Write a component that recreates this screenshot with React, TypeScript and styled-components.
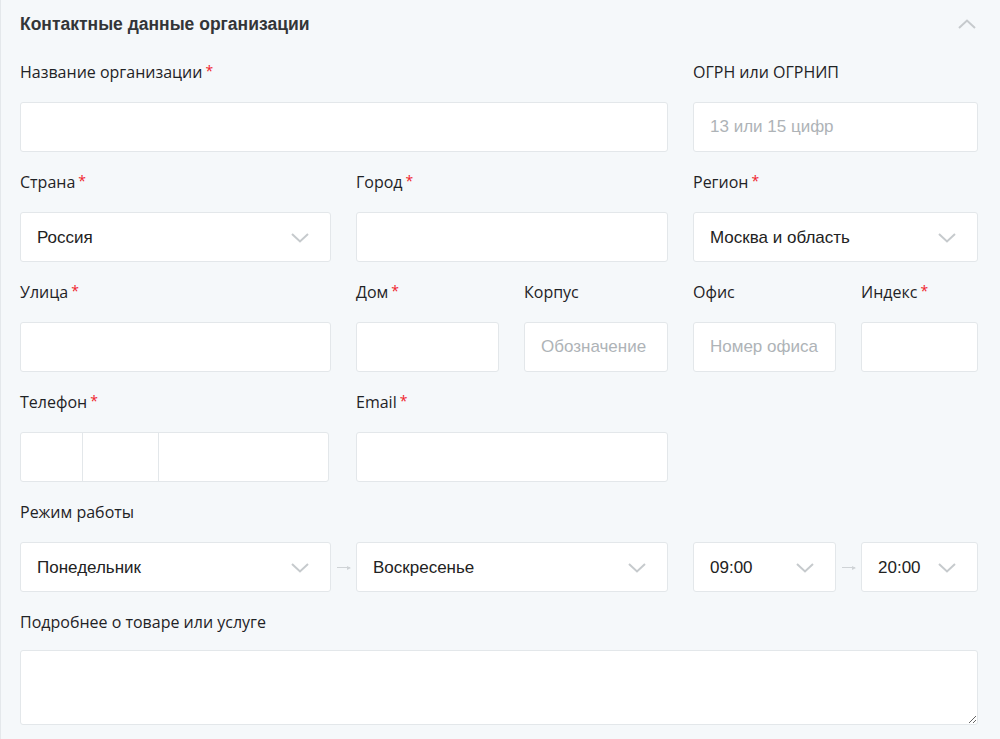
import styled, { createGlobalStyle } from "styled-components";

const GlobalStyle = createGlobalStyle`
  html, body {
    margin: 0;
    padding: 0;
    background: #f5f8fa;
  }
  * {
    box-sizing: border-box;
  }
`;

const Chevron = ({ up = false }: { up?: boolean }) => (
  <svg width="18" height="10" viewBox="0 0 18 10" fill="none">
    <path
      d={up ? "M1 9 L9 1.5 L17 9" : "M1 1 L9 8.5 L17 1"}
      stroke="#c6cacd"
      strokeWidth="2"
    />
  </svg>
);

const Field = ({ label, required = false, span = 1, children, arrow = false }) => (
  <FieldBox $span={span} $arrow={arrow}>
    {label !== undefined && (
      <Label>
        {label}
        {required && <Star>*</Star>}
      </Label>
    )}
    {children}
  </FieldBox>
);

const Select = ({ value }) => (
  <SelectBox>
    <span>{value}</span>
    <Chevron />
  </SelectBox>
);

const App = () => {
  return (
    <>
      <GlobalStyle />
      <Panel>
        <Header>
          <h3>Контактные данные организации</h3>
          <Chevron up />
        </Header>
        <Form>
          <Field label="Название организации" required span={3}>
            <Input />
          </Field>
          <Field label="ОГРН или ОГРНИП" span={2}>
            <Input placeholder="13 или 15 цифр" />
          </Field>

          <Field label="Страна" required>
            <Select value="Россия" />
          </Field>
          <Field label="Город" required span={2}>
            <Input />
          </Field>
          <Field label="Регион" required span={2}>
            <Select value="Москва и область" />
          </Field>

          <Field label="Улица" required>
            <Input />
          </Field>
          <Field label="Дом" required>
            <Input />
          </Field>
          <Field label="Корпус">
            <Input placeholder="Обозначение" />
          </Field>
          <Field label="Офис">
            <Input placeholder="Номер офиса" />
          </Field>
          <Field label="Индекс" required>
            <Input />
          </Field>

          <Field label="Телефон" required>
            <Phone>
              <PhonePart $w={61} />
              <PhonePart $w={77} />
              <PhonePart $w={171} />
            </Phone>
          </Field>
          <Field label="Email" required span={2}>
            <Input />
          </Field>
          <Spacer />

          <Field label="Режим работы">
            <Select value="Понедельник" />
          </Field>
          <Field label="" span={2} arrow>
            <Select value="Воскресенье" />
          </Field>
          <Field label="">
            <Select value="09:00" />
          </Field>
          <Field label="" arrow>
            <Select value="20:00" />
          </Field>

          <Field label="Подробнее о товаре или услуге" span={5}>
            <TextArea />
          </Field>
        </Form>
      </Panel>
    </>
  );
};

export default App;

const Panel = styled.section`
  min-height: 739px;
  border-left: 1px solid #e4e8eb;
  background: #f5f8fa;
  padding: 0 22px 0 19px;
  font-family: "Liberation Sans", Arial, sans-serif;
`;

const Header = styled.div`
  display: flex;
  align-items: center;
  justify-content: space-between;
  height: 50px;
  padding-right: 2px;
  padding-bottom: 2px;
  h3 {
    margin: 0;
    font-size: 17.5px;
    font-weight: 700;
    color: #333538;
  }
`;

const Form = styled.div`
  display: grid;
  grid-template-columns: 311px 143px 144px 143px 117px;
  column-gap: 25px;
  row-gap: 20px;
  padding-top: 12px;
`;

const FieldBox = styled.div<{ $span: number; $arrow: boolean }>`
  grid-column: span ${(p) => p.$span};
  display: flex;
  flex-direction: column;
  gap: 20px;
  position: relative;
  ${(p) =>
    p.$arrow &&
    `
    &::before {
      content: "";
      position: absolute;
      left: -19px;
      bottom: 24px;
      width: 13px;
      height: 1px;
      background: #cfd3d6;
    }
    &::after {
      content: "";
      position: absolute;
      left: -9px;
      bottom: 22px;
      border-left: 4px solid #cfd3d6;
      border-top: 2.5px solid transparent;
      border-bottom: 2.5px solid transparent;
    }
  `}
`;

const Label = styled.label`
  display: block;
  height: 20px;
  line-height: 20px;
  font-family: "Open Sans", "Noto Sans", sans-serif;
  font-size: 16px;
  color: #1f2326;
  white-space: nowrap;
`;

const Star = styled.span`
  color: #f0222a;
  margin-left: 3px;
  font-size: 14px;
  position: relative;
  top: -2px;
`;

const Input = styled.input`
  height: 50px;
  width: 100%;
  border: 1px solid #e3e7ea;
  border-radius: 3px;
  background: #fff;
  padding: 0 16px;
  font-family: "Liberation Sans", Arial, sans-serif;
  font-size: 17px;
  color: #222;
  outline: none;
  &::placeholder {
    color: #aeb3b7;
  }
`;

const SelectBox = styled.div`
  height: 50px;
  display: flex;
  align-items: center;
  justify-content: space-between;
  border: 1px solid #e3e7ea;
  border-radius: 3px;
  background: #fff;
  padding: 2px 21px 0 16px;
  font-size: 17px;
  color: #222;
`;

const Phone = styled.div`
  display: flex;
  height: 50px;
  width: 309px;
  border: 1px solid #e3e7ea;
  border-radius: 3px;
  background: #fff;
  overflow: hidden;
`;

const PhonePart = styled.div<{ $w: number }>`
  width: ${(p) => p.$w}px;
  height: 100%;
  & + & {
    border-left: 1px solid #e3e7ea;
  }
`;

const Spacer = styled.div`
  grid-column: span 2;
`;

const TextArea = styled.textarea`
  height: 75px;
  width: 100%;
  margin-top: -2px;
  border: 1px solid #e3e7ea;
  border-radius: 3px;
  background: #fff;
  resize: vertical;
  outline: none;
`;
